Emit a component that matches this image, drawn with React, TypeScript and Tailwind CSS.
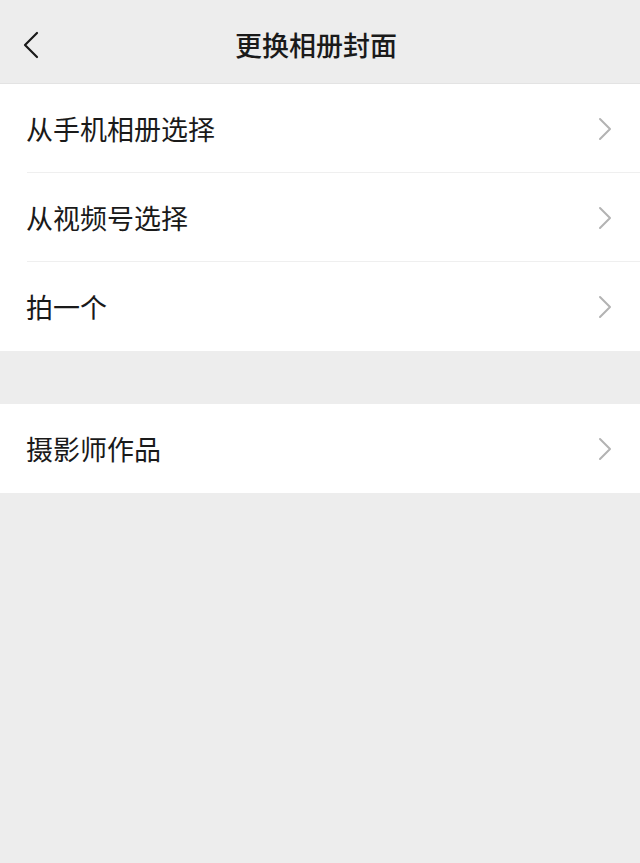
const group1 = ["从手机相册选择", "从视频号选择", "拍一个"];

function Arrow() {
  return (
    <svg width="14" height="24" viewBox="0 0 14 24" fill="none" className="mr-[28px]">
      <path d="M2 2 L12 12 L2 22" stroke="#b3b3b3" strokeWidth="2" strokeLinecap="round" strokeLinejoin="round" />
    </svg>
  );
}

function Row({ label, divider }: { label: string; divider?: boolean }) {
  return (
    <div className="relative flex h-[89px] items-center justify-between bg-white pl-[26px]">
      <span className="text-[27px] leading-none text-[#1a1a1a]">{label}</span>
      <Arrow />
      {divider && <div className="absolute bottom-0 left-[27px] right-0 h-px bg-[#efefef]" />}
    </div>
  );
}

export default function App() {
  return (
    <main
      className="min-h-[863px] bg-[#ededed]"
      style={{ fontFamily: '"Noto Sans CJK SC", "Noto Sans", sans-serif' }}
    >
      {/* Header */}
      <div className="relative flex h-[84px] items-center justify-center border-b border-[#e3e3e3] pt-[6px]">
        <svg className="absolute left-[22px] top-[31px]" width="18" height="28" viewBox="0 0 18 28" fill="none">
          <path d="M15 2 L3 14 L15 26" stroke="#1a1a1a" strokeWidth="2.2" strokeLinecap="round" strokeLinejoin="round" />
        </svg>
        <h1 className="mr-[8px] text-[27px] font-medium leading-none text-[#1a1a1a]">更换相册封面</h1>
      </div>

      <div>
        {group1.map((label, i) => (
          <Row key={label} label={label} divider={i < group1.length - 1} />
        ))}
      </div>

      <div className="mt-[53px]">
        <Row label="摄影师作品" />
      </div>
    </main>
  );
}
